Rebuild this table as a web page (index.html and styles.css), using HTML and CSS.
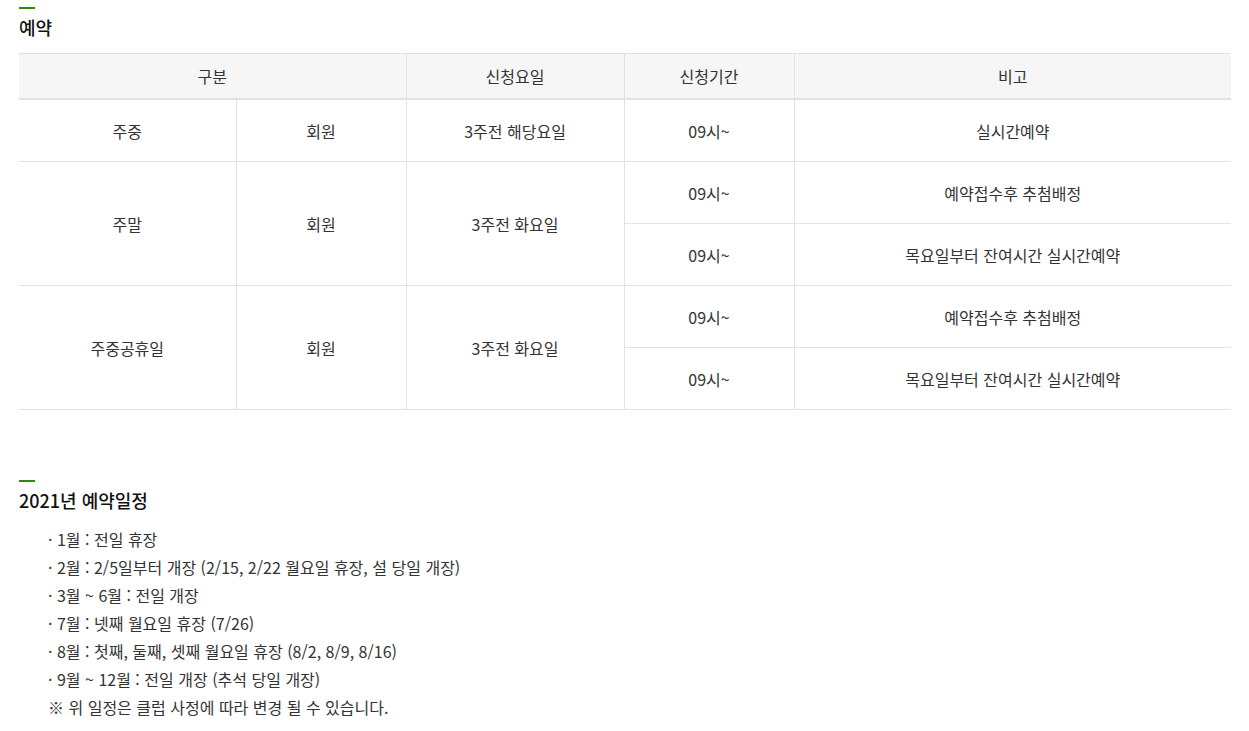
FILE: index.html
```html
<!DOCTYPE html>
<html lang="ko">
<head>
<meta charset="utf-8">
<link rel="stylesheet" href="styles.css">
</head>
<body>
<div class="page">
  <section class="sec">
    <h3 class="title">예약</h3>
    <table class="tbl">
      <colgroup>
        <col class="c1"><col class="c2"><col class="c3"><col class="c4"><col>
      </colgroup>
      <thead>
        <tr><th colspan="2">구분</th><th>신청요일</th><th>신청기간</th><th>비고</th></tr>
      </thead>
      <tbody>
        <tr><td>주중</td><td>회원</td><td>3주전 해당요일</td><td>09시~</td><td>실시간예약</td></tr>
        <tr><td rowspan="2">주말</td><td rowspan="2">회원</td><td rowspan="2">3주전 화요일</td><td>09시~</td><td>예약접수후 추첨배정</td></tr>
        <tr><td>09시~</td><td>목요일부터 잔여시간 실시간예약</td></tr>
        <tr><td rowspan="2">주중공휴일</td><td rowspan="2">회원</td><td rowspan="2">3주전 화요일</td><td>09시~</td><td>예약접수후 추첨배정</td></tr>
        <tr><td>09시~</td><td>목요일부터 잔여시간 실시간예약</td></tr>
      </tbody>
    </table>
  </section>
  <section class="sec sec2">
    <h3 class="title">2021년 예약일정</h3>
    <ul class="list">
      <li>· 1월 : 전일 휴장</li>
      <li>· 2월 : 2/5일부터 개장 (2/15, 2/22 월요일 휴장, 설 당일 개장)</li>
      <li>· 3월 ~ 6월 : 전일 개장</li>
      <li>· 7월 : 넷째 월요일 휴장 (7/26)</li>
      <li>· 8월 : 첫째, 둘째, 셋째 월요일 휴장 (8/2, 8/9, 8/16)</li>
      <li>· 9월 ~ 12월 : 전일 개장 (추석 당일 개장)</li>
      <li>※ 위 일정은 클럽 사정에 따라 변경 될 수 있습니다.</li>
    </ul>
  </section>
</div>
</body>
</html>
```
FILE: styles.css
```css
html, body { margin: 0; padding: 0; background: #fff; }
body {
  font-family: "Noto Sans CJK KR", "Noto Sans", sans-serif;
  color: #333;
}
.page { padding: 7px 18px 0 19px; }
.title {
  margin: 0;
  font-size: 18px;
  font-weight: 500;
  color: #111;
  line-height: 24px;
  padding-top: 8px;
  position: relative;
}
.title::before {
  content: "";
  position: absolute;
  left: 0; top: 0;
  width: 16px; height: 2px;
  background: #2e8b0a;
}
.tbl {
  margin-top: 14px;
  width: 100%;
  border-collapse: collapse;
  table-layout: fixed;
  font-size: 16px;
}
.c1 { width: 217px; }
.c2 { width: 170px; }
.c3 { width: 218px; }
.c4 { width: 170px; }
.tbl th, .tbl td {
  text-align: center;
  border: 1px solid #e2e2e2;
  font-weight: 400;
  color: #333;
  padding: 0;
}
.tbl th:first-child, .tbl td:first-child { border-left: none; }
.tbl tr > :last-child { border-right: none; }
.tbl thead th {
  background: #f6f6f6;
  height: 44px;
  border-bottom: 2px solid #e2e2e2;
}
.tbl tbody td { height: 61px; }
.tbl tbody tr:nth-child(2) td[rowspan],
.tbl tbody tr:nth-child(4) td[rowspan] { border-left: none; }
.tbl tbody tr:nth-child(2) td[rowspan] + td[rowspan],
.tbl tbody tr:nth-child(4) td[rowspan] + td[rowspan] { border-left: 1px solid #e2e2e2; }
.sec2 { margin-top: 70px; }
.list {
  list-style: none;
  margin: 13px 0 0;
  padding: 0 0 0 29px;
  font-size: 16px;
  line-height: 28px;
  color: #333;
}
```
